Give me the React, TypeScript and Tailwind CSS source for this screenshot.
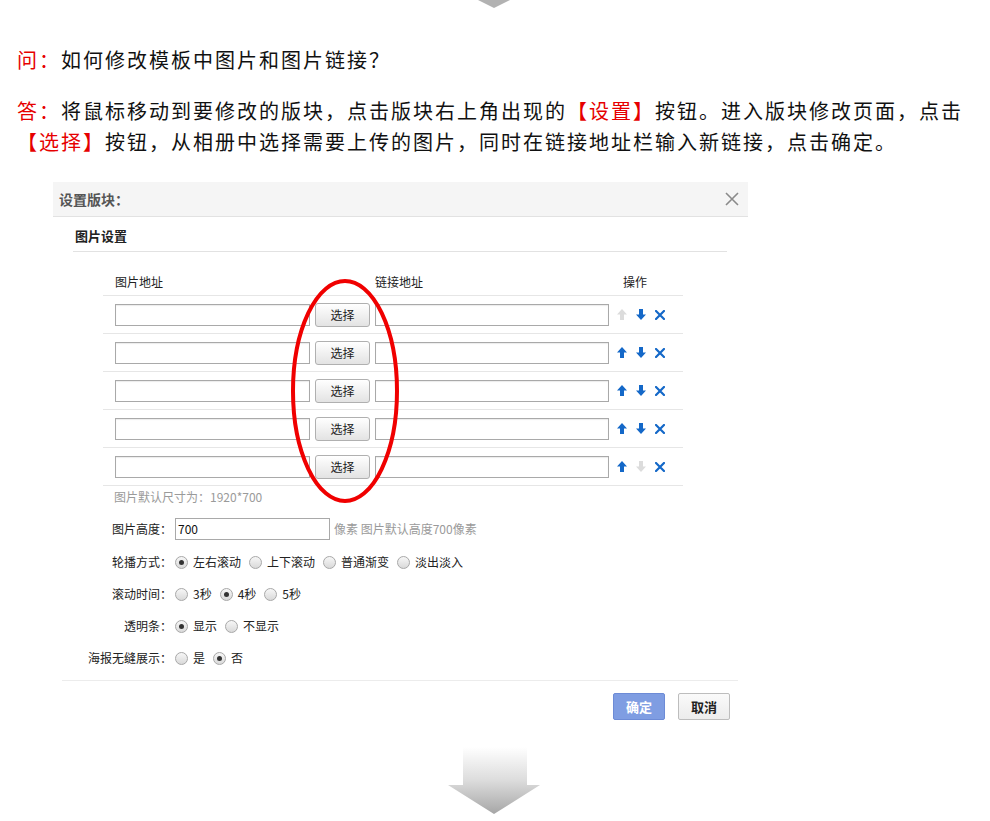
import React from "react";

const FONT = { fontFamily: '"Noto Sans CJK SC", "Liberation Sans", sans-serif' };

function Radio({ checked }: { checked?: boolean }) {
  return (
    <span className="w-[13px] h-[13px] rounded-full border border-[#a8a8a8] bg-gradient-to-b from-[#f7f7f7] to-[#d9d9d9] flex items-center justify-center shrink-0">
      {checked && <span className="w-[5px] h-[5px] rounded-full bg-[#333]" />}
    </span>
  );
}

function RadioGroup({ items, checkedIndex }: { items: string[]; checkedIndex: number }) {
  return (
    <div className="flex items-center ml-[3px]">
      {items.map((t, i) => (
        <div key={i} className="flex items-center mr-[8px]">
          <Radio checked={i === checkedIndex} />
          <span className="ml-[5px] text-[12px] text-[#222] leading-[16px]">{t}</span>
        </div>
      ))}
    </div>
  );
}

function UpIcon({ disabled }: { disabled?: boolean }) {
  return (
    <svg width="10" height="11" viewBox="0 0 10 11">
      <path d="M5 0 L10 5.5 H7 V11 H3 V5.5 H0 Z" fill={disabled ? "#dcdcdc" : "#1468c8"} />
    </svg>
  );
}
function DownIcon({ disabled }: { disabled?: boolean }) {
  return (
    <svg width="10" height="11" viewBox="0 0 10 11">
      <path d="M5 11 L10 5.5 H7 V0 H3 V5.5 H0 Z" fill={disabled ? "#dcdcdc" : "#1468c8"} />
    </svg>
  );
}
function XIcon() {
  return (
    <svg width="10" height="10" viewBox="0 0 10 10">
      <path d="M1 1 L9 9 M9 1 L1 9" stroke="#1468c8" strokeWidth="2.2" strokeLinecap="square" />
    </svg>
  );
}

function Row({ idx }: { idx: number }) {
  return (
    <div className="h-[38px] border-b border-[#e6e6e6] flex items-center pl-[12px]">
      <div className="w-[195px] h-[22px] border border-[#a9a9a9] bg-white shadow-[inset_0_1px_1px_rgba(0,0,0,0.08)]" />
      <button className="ml-[5px] w-[55px] h-[24px] rounded-[3px] border border-[#b0b0b0] bg-gradient-to-b from-white to-[#e3e3e3] text-[12px] text-[#222] flex items-center justify-center">
        选择
      </button>
      <div className="ml-[5px] w-[234px] h-[22px] border border-[#a9a9a9] bg-white shadow-[inset_0_1px_1px_rgba(0,0,0,0.08)]" />
      <div className="ml-[8px] flex items-center gap-[9px]">
        <UpIcon disabled={idx === 0} />
        <DownIcon disabled={idx === 4} />
        <XIcon />
      </div>
    </div>
  );
}

export default function App() {
  const red = "text-[#e60000]";
  return (
    <div className="w-[990px] h-[821px] bg-white overflow-hidden text-[#111]" style={FONT}>
      {/* top arrow tip */}
      <div className="pl-[474px] h-[8px]">
        <svg width="40" height="8" viewBox="0 0 40 8">
          <path d="M4 0 H36 L20 8 Z" fill="#b2b2b2" />
        </svg>
      </div>

      {/* Q & A */}
      <div className="mt-[37px] pl-[17px] text-[20px] tracking-[2px] leading-[30px]">
        <span className={red}>问：</span>如何修改模板中图片和图片链接？
      </div>
      <div className="mt-[20px] pl-[17px] w-[970px] text-[20px] tracking-[2px] leading-[31px]">
        <span className={red}>答：</span>将鼠标移动到要修改的版块，点击版块右上角出现的
        <span className={red}>【设置】</span>按钮。进入版块修改页面，点击
        <span className={red}>【选择】</span>按钮，从相册中选择需要上传的图片，同时在链接地址栏输入新链接，点击确定。
      </div>

      {/* dialog */}
      <div className="relative ml-[53px] mt-[25px] w-[695px] bg-white pb-[10px]">
        <div className="h-[35px] bg-[#f5f5f5] border-b border-[#e2e2e2] flex items-center justify-between pl-[6px] pr-[9px]">
          <span className="text-[14px] font-bold text-[#555]">设置版块：</span>
          <svg width="14" height="14" viewBox="0 0 14 14">
            <path d="M1 1 L13 13 M13 1 L1 13" stroke="#8a8a8a" strokeWidth="1.6" />
          </svg>
        </div>

        <div className="ml-[20px] mr-[21px] h-[35px] pt-[4px] border-b border-[#e2e2e2] flex items-center">
          <span className="pl-[2px] text-[13px] leading-[20px] font-bold text-[#222]">图片设置</span>
        </div>

        <div className="ml-[50px] w-[580px]">
          <div className="mt-[17px] h-[27px] border-b border-[#e6e6e6] flex items-center text-[12px] text-[#222]">
            <div className="w-[272px] pl-[12px]">图片地址</div>
            <div className="w-[248px]">链接地址</div>
            <div>操作</div>
          </div>
          {[0, 1, 2, 3, 4].map((i) => (
            <Row key={i} idx={i} />
          ))}
        </div>

        <div className="ml-[61px] mt-[2px] h-[18px] flex items-center text-[12px] text-[#9a9a9a]">
          图片默认尺寸为：1920*700
        </div>

        <div className="mt-[6px]">
          <div className="h-[34px] flex items-center">
            <div className="w-[119px] text-right text-[12px] text-[#222]">图片高度：</div>
            <div className="ml-[3px] w-[155px] h-[22px] border border-[#a9a9a9] bg-white flex items-center pl-[2px] text-[12px] text-[#111]">
              700
            </div>
            <span className="ml-[4px] text-[12px] text-[#9a9a9a]">像素 图片默认高度700像素</span>
          </div>
          <div className="h-[32px] flex items-center">
            <div className="w-[119px] text-right text-[12px] text-[#222]">轮播方式：</div>
            <RadioGroup items={["左右滚动", "上下滚动", "普通渐变", "淡出淡入"]} checkedIndex={0} />
          </div>
          <div className="h-[32px] flex items-center">
            <div className="w-[119px] text-right text-[12px] text-[#222]">滚动时间：</div>
            <RadioGroup items={["3秒", "4秒", "5秒"]} checkedIndex={1} />
          </div>
          <div className="h-[32px] flex items-center">
            <div className="w-[119px] text-right text-[12px] text-[#222]">透明条：</div>
            <RadioGroup items={["显示", "不显示"]} checkedIndex={0} />
          </div>
          <div className="h-[32px] flex items-center">
            <div className="w-[119px] text-right text-[12px] text-[#222]">海报无缝展示：</div>
            <RadioGroup items={["是", "否"]} checkedIndex={1} />
          </div>
        </div>

        <div className="mt-[6px] ml-[9px] mr-[10px] border-t border-[#ececec]" />
        <div className="mt-[12px] flex justify-end pr-[18px] gap-[13px]">
          <button className="w-[52px] h-[27px] rounded-[2px] border border-[#6d8bd6] bg-[#7f9de2] text-white text-[13px] font-bold flex items-center justify-center">
            确定
          </button>
          <button className="w-[52px] h-[27px] rounded-[2px] border border-[#bdbdbd] bg-gradient-to-b from-[#fafafa] to-[#ececec] text-[#222] text-[13px] font-bold flex items-center justify-center">
            取消
          </button>
        </div>

        {/* red ellipse annotation */}
        <svg
          className="absolute left-[237px] top-[96px] pointer-events-none"
          width="110"
          height="226"
          viewBox="0 0 110 226"
        >
          <ellipse cx="55" cy="113" rx="52" ry="110" fill="none" stroke="#f00000" strokeWidth="4" />
        </svg>
      </div>

      {/* bottom arrow */}
      <div className="mt-[17px] pl-[448px]">
        <svg width="92" height="68" viewBox="0 0 92 68">
          <defs>
            <linearGradient id="ag" x1="0" y1="0" x2="0" y2="1">
              <stop offset="0" stopColor="#ffffff" />
              <stop offset="0.5" stopColor="#dcdcdc" />
              <stop offset="1" stopColor="#a6a6a6" />
            </linearGradient>
          </defs>
          <path d="M15 0 H79 V38 H92 L46 67 L0 38 H15 Z" fill="url(#ag)" />
        </svg>
      </div>
    </div>
  );
}
